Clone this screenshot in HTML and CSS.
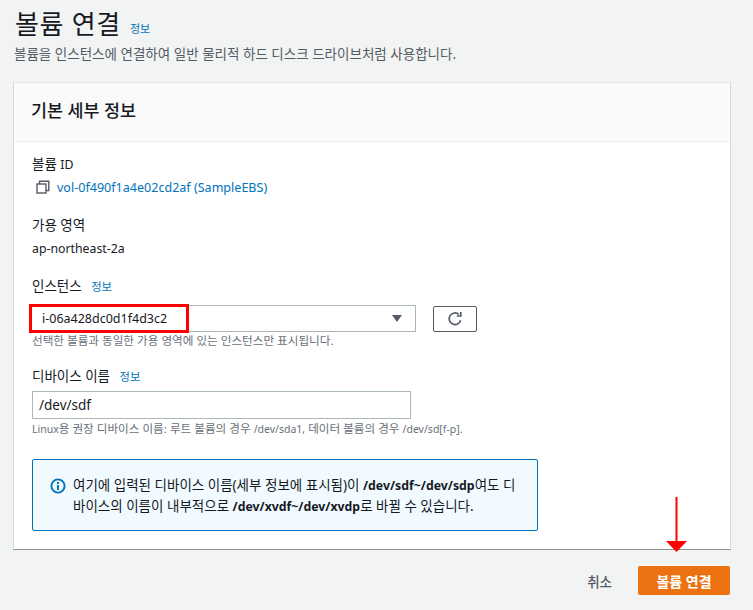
FILE: index.html
```html
<!DOCTYPE html>
<html lang="ko">
<head>
<meta charset="utf-8">
<title>볼륨 연결</title>
<link rel="stylesheet" href="styles.css">
</head>
<body>
<main class="page">
  <header class="page-head">
    <div class="title-row">
      <h1 class="title">볼륨 연결</h1>
      <a class="info info-title">정보</a>
    </div>
    <p class="subtitle">볼륨을 인스턴스에 연결하여 일반 물리적 하드 디스크 드라이브처럼 사용합니다.</p>
  </header>

  <section class="card">
    <div class="card-head"><h2 class="card-title">기본 세부 정보</h2></div>
    <div class="card-body">
      <div class="field field-vol">
        <div class="label">볼륨 <span class="en">ID</span></div>
        <div class="vol-row">
          <svg class="copy-icon" width="14" height="14" viewBox="0 0 14 14" fill="none" stroke="#545b64" stroke-width="1.4">
            <rect x="1" y="4" width="9" height="9"/>
            <path d="M3.5 4V1.2h9.3V10.500h-2.800"/>
          </svg>
          <a class="vol-link">vol-0f490f1a4e02cd2af (SampleEBS)</a>
        </div>
      </div>

      <div class="field field-az">
        <div class="label">가용 영역</div>
        <div class="value">ap-northeast-2a</div>
      </div>

      <div class="field field-inst">
        <div class="label">인스턴스 <a class="info info-label">정보</a></div>
        <div class="select-row">
          <div class="select">
            <span class="select-text">i-06a428dc0d1f4d3c2</span>
            <span class="caret"></span>
            <span class="red-box"></span>
          </div>
          <button class="refresh" type="button" aria-label="새로 고침">
            <svg width="16" height="16" viewBox="0 0 16 16" fill="none" stroke="#545b64" stroke-width="1.7">
              <path d="M13.6 9.200A5.800 5.800 0 1 1 11.800 3.400"/>
              <path d="M13.800 1v4h-4"/>
            </svg>
          </button>
        </div>
        <div class="hint">선택한 볼륨과 동일한 가용 영역에 있는 인스턴스만 표시됩니다.</div>
      </div>

      <div class="field field-dev">
        <div class="label">디바이스 이름 <a class="info info-label">정보</a></div>
        <div class="input">/dev/sdf</div>
        <div class="hint hint-dev"><span class="en-sm">Linux</span>용 권장 디바이스 이름: 루트 볼륨의 경우 <span class="en-sm">/dev/sda1,</span> 데이터 볼륨의 경우 <span class="en-sm">/dev/sd[f-p].</span></div>
      </div>

      <div class="alert">
        <svg class="alert-icon" width="16" height="16" viewBox="0 0 16 16" fill="none">
          <circle cx="8" cy="8" r="6.600" stroke="#0073bb" stroke-width="1.900"/>
          <rect x="7" y="7" width="2" height="5" fill="#0073bb"/>
          <rect x="7" y="4" width="2" height="2" fill="#0073bb"/>
        </svg>
        <p class="alert-text">여기에 입력된 디바이스 이름(세부 정보에 표시됨)이 <b class="en">/dev/sdf~/dev/sdp</b>여도 디바이스의 이름이 내부적으로 <b class="en">/dev/xvdf~/dev/xvdp</b>로 바뀔 수 있습니다.</p>
      </div>
    </div>
  </section>

  <footer class="actions">
    <button class="btn-cancel" type="button">취소</button>
    <button class="btn-primary" type="button">볼륨 연결</button>
    <svg class="arrow" width="21" height="55" viewBox="0 0 21 55">
      <rect x="9.500" y="0" width="2" height="45" fill="#f00"/>
      <path d="M0 44h21L10.500 55z" fill="#f00"/>
    </svg>
  </footer>
</main>
</body>
</html>
```

FILE: styles.css
```css
* { box-sizing: border-box; }
html, body { margin: 0; padding: 0; }
body {
  background: #f2f3f3;
  color: #16191f;
  font-family: "Noto Sans", "Noto Sans CJK KR", sans-serif;
  font-size: 13.5px;
  height: 610px;
  overflow: hidden;
}
.en { font-size: 12.3px; }
.en-sm { font-size: 10.5px; }
.page { padding: 0 22px 0 13px; }
.page-head { padding-top: 5px; height: 82px; }
.title-row { display: flex; align-items: center; padding-left: 2px; gap: 9px; height: 38px; }
.title { margin: 0; font-size: 26px; font-weight: 400; line-height: 38px; letter-spacing: 0.7px; color: #16191f; }
.info { color: #0073bb; font-size: 11px; }
.info-title { position: relative; top: 4px; }
.subtitle { margin: 1px 0 0; color: #545b64; font-size: 13.530px; line-height: 20px; padding-left: 1px; }

.card {
  background: #fff;
  border-left: 1px solid #d5dbdb;
  border-right: 1px solid #d5dbdb;
  border-top: 1px solid #e4e7e7;
  border-bottom: 1px solid #8d9696;
  height: 468px;
}
.card-head {
  background: #fafafa;
  border-bottom: 1px solid #eaeded;
  height: 59px;
  padding: 0 17px 6px;
  display: flex;
  align-items: center;
}
.card-title { margin: 0; font-size: 17.400px; font-weight: 500; }
.card-body { padding: 13px 18px 0; }
.label { font-size: 13.500px; line-height: 18px; color: #16191f; }
.field-vol { height: 61px; }
.vol-row { display: flex; align-items: center; gap: 7px; margin-top: 4px; padding-left: 4px; height: 18px; }
.copy-icon { flex: none; }
.vol-link { color: #0073bb; font-size: 12.550px; }
.field-az { height: 61px; }
.value { font-size: 12.300px; line-height: 18px; margin-top: 6px; }
.field-inst { height: 90px; }
.info-label { font-size: 11.300px; margin-left: 6px; }
.select-row { display: flex; align-items: center; gap: 17px; margin-top: 9px; }
.select {
  position: relative;
  width: 386px;
  height: 27px;
  margin-left: -2px;
  background: #fff;
  border: 1px solid #aab7b8;
  display: flex;
  align-items: center;
  padding: 0 13px 0 11px;
  justify-content: space-between;
  font-size: 12.500px;
}
.caret {
  width: 0; height: 0;
  border-left: 5px solid transparent;
  border-right: 5px solid transparent;
  border-top: 7px solid #545b64;
}
.red-box {
  position: absolute;
  left: -2px; top: -2px;
  width: 160px; height: 29px;
  border: 3px solid #f00;
}
.refresh {
  width: 44px; height: 26px;
  background: #fff;
  border: 1px solid #545b64;
  border-radius: 2px;
  padding: 0;
  display: flex; align-items: center; justify-content: center;
}
.hint { font-size: 11.600px; line-height: 15px; color: #687078; margin-top: 1px; }
.field-dev { height: 92px; }
.input {
  width: 379px;
  height: 28px;
  margin-top: 5px;
  background: #fff;
  border: 1px solid #aab7b8;
  font-size: 13.500px;
  line-height: 26px;
  padding-left: 6px;
}
.hint-dev { margin-top: 2px; }
.alert {
  width: 506px;
  height: 72px;
  background: #f1faff;
  border: 1px solid #0073bb;
  border-radius: 2px;
  display: flex;
  align-items: flex-start;
  padding: 15px 14px 0 17px;
  gap: 7px;
}
.alert-icon { flex: none; margin-top: 3px; }
.alert-text { margin: 0; font-size: 13.500px; line-height: 20px; color: #16191f; }
.alert-text b { font-weight: 700; }

.actions { position: relative; display: flex; justify-content: flex-end; align-items: center; gap: 26px; padding-top: 16px; margin-right: 1px; }
.btn-cancel { background: none; border: 0; padding: 0; color: #545b64; font: 500 13.500px "Noto Sans", "Noto Sans CJK KR", sans-serif; }
.btn-primary {
  width: 92px; height: 29px;
  background: #ec7211;
  border: 0;
  border-radius: 2px;
  color: #fff;
  font: 700 14px "Noto Sans", "Noto Sans CJK KR", sans-serif;
}
.arrow { position: absolute; right: 43px; top: -53px; }
```
